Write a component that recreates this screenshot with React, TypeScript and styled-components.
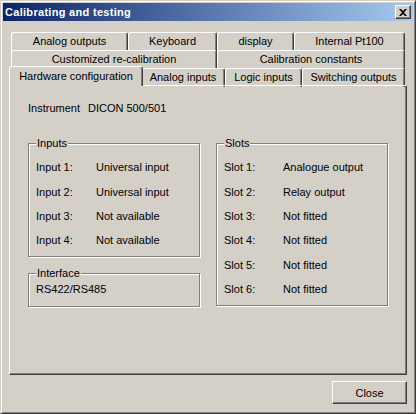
import React from 'react';
import styled, { createGlobalStyle } from 'styled-components';

const GlobalStyle = createGlobalStyle`
  html, body {
    margin: 0;
    padding: 0;
    background: #d4d0c8;
  }
  body {
    font-family: "Liberation Sans", Arial, sans-serif;
    font-size: 11px;
    color: #000;
  }
`;

const Window = styled.div`
  width: 416px;
  height: 414px;
  box-sizing: border-box;
  display: flex;
  flex-direction: column;
  background: #d4d0c8;
  border-top: 1px solid #d4d0c8;
  border-left: 1px solid #d4d0c8;
  border-right: 1px solid #404040;
  border-bottom: 1px solid #404040;
  box-shadow: inset 1px 1px 0 #ffffff, inset -1px -1px 0 #808080;
  padding: 2px;
`;

const TitleBar = styled.div`
  height: 18px;
  flex: none;
  display: flex;
  align-items: center;
  justify-content: space-between;
  padding: 0 2px 0 2px;
  background: linear-gradient(to right, #0a246a, #a6caf0);
`;

const Title = styled.span`
  color: #fff;
  font-weight: bold;
  font-size: 11px;
  letter-spacing: 0.3px;
`;

const TitleButton = styled.div`
  width: 16px;
  height: 14px;
  box-sizing: border-box;
  display: flex;
  align-items: center;
  justify-content: center;
  background: #d4d0c8;
  border-top: 1px solid #ffffff;
  border-left: 1px solid #ffffff;
  border-right: 1px solid #404040;
  border-bottom: 1px solid #404040;
  box-shadow: inset -1px -1px 0 #808080;
`;

const Body = styled.div`
  flex: 1;
  display: flex;
  flex-direction: column;
  padding: 11px 6px 8px 6px;
`;

const Tabs = styled.div`
  display: flex;
  flex-direction: column;
  margin-left: 2px;
  margin-right: 2px;
`;

const TabRow = styled.div<{ $height: number }>`
  display: flex;
  align-items: flex-start;
  height: ${p => p.$height}px;
`;

const Tab = styled.div<{ $width: number; $selected?: boolean; $height: number }>`
  position: relative;
  box-sizing: border-box;
  width: ${p => p.$width + (p.$selected ? 4 : 0)}px;
  height: ${p => (p.$selected ? p.$height + 3 : p.$height + 2)}px;
  margin: ${p => (p.$selected ? '-2px -2px 0 -2px' : '0')};
  z-index: ${p => (p.$selected ? 2 : 1)};
  display: flex;
  align-items: flex-start;
  justify-content: center;
  padding-top: ${p => (p.$selected ? 3 : 2)}px;
  background: #d4d0c8;
  border-top: 1px solid #ffffff;
  border-left: 1px solid #ffffff;
  border-right: 1px solid #404040;
  border-radius: 3px 3px 0 0;
  box-shadow: inset -1px 0 0 #808080;
  white-space: nowrap;
  font-size: 11px;
`;

const Panel = styled.div`
  position: relative;
  z-index: 1;
  height: 290px;
  box-sizing: border-box;
  border-top: 1px solid #ffffff;
  border-left: 1px solid #ffffff;
  border-right: 1px solid #404040;
  border-bottom: 1px solid #404040;
  box-shadow: inset -1px -1px 0 #808080;
  padding: 16px 17px 0 18px;
  display: flex;
  flex-direction: column;
`;

const InfoLine = styled.div`
  display: flex;
  line-height: 13px;
`;

const Label = styled.span<{ $width: number }>`
  width: ${p => p.$width}px;
  flex: none;
`;

const Columns = styled.div`
  display: flex;
  gap: 16px;
  margin-top: 22px;
`;

const Column = styled.div`
  display: flex;
  flex-direction: column;
  gap: 10px;
`;

const Group = styled.fieldset<{ $pad: string }>`
  width: 172px;
  box-sizing: border-box;
  margin: 0;
  padding: ${p => p.$pad};
  min-inline-size: 0;
  border: 1px solid #808080;
  box-shadow: inset 1px 1px 0 #ffffff, 1px 1px 0 #ffffff;
`;

const Legend = styled.legend`
  padding: 0 1px;
  margin-left: 0;
  line-height: 13px;
  background: #d4d0c8;
`;

const Row = styled.div`
  display: flex;
  height: 24.4px;
  align-items: center;
`;

const Footer = styled.div`
  display: flex;
  justify-content: flex-end;
  margin-top: 6px;
`;

const Button = styled.button`
  width: 75px;
  height: 23px;
  box-sizing: border-box;
  font-family: "Liberation Sans", Arial, sans-serif;
  font-size: 11px;
  color: #000;
  background: #d4d0c8;
  border-top: 1px solid #ffffff;
  border-left: 1px solid #ffffff;
  border-right: 1px solid #404040;
  border-bottom: 1px solid #404040;
  box-shadow: inset -1px -1px 0 #808080;
  padding: 0;
`;

const backRows = [
  [
    { label: 'Analog outputs', width: 117 },
    { label: 'Keyboard', width: 89 },
    { label: 'display', width: 77 },
    { label: 'Internal Pt100', width: 111 },
  ],
  [
    { label: 'Customized re-calibration', width: 206 },
    { label: 'Calibration constants', width: 188 },
  ],
];

const frontRow = [
  { label: 'Hardware configuration', width: 130 },
  { label: 'Analog inputs', width: 84 },
  { label: 'Logic inputs', width: 77 },
  { label: 'Switching outputs', width: 103 },
];

const inputs = [
  ['Input 1:', 'Universal input'],
  ['Input 2:', 'Universal input'],
  ['Input 3:', 'Not available'],
  ['Input 4:', 'Not available'],
];

const slots = [
  ['Slot 1:', 'Analogue output'],
  ['Slot 2:', 'Relay output'],
  ['Slot 3:', 'Not fitted'],
  ['Slot 4:', 'Not fitted'],
  ['Slot 5:', 'Not fitted'],
  ['Slot 6:', 'Not fitted'],
];

export default function App() {
  return (
    <>
      <GlobalStyle />
      <Window>
        <TitleBar>
          <Title>Calibrating and testing</Title>
          <TitleButton>
            <svg width="8" height="7" viewBox="0 0 8 7">
              <path d="M0 0h2l2 2 2-2h2L5 3.5 8 7H6L4 5 2 7H0l3-3.5z" fill="#000" />
            </svg>
          </TitleButton>
        </TitleBar>
        <Body>
          <Tabs>
            {backRows.map((row, i) => (
              <TabRow key={i} $height={18}>
                {row.map(t => (
                  <Tab key={t.label} $width={t.width} $height={18}>
                    {t.label}
                  </Tab>
                ))}
              </TabRow>
            ))}
            <TabRow $height={17}>
              {frontRow.map((t, i) => (
                <Tab key={t.label} $width={t.width} $height={17} $selected={i === 0}>
                  {t.label}
                </Tab>
              ))}
            </TabRow>
          </Tabs>
          <Panel>
            <InfoLine>
              <Label $width={60}>Instrument</Label>
              <span>DICON 500/501</span>
            </InfoLine>
            <Columns>
              <Column>
                <Group $pad="5px 7px 3px 7px">
                  <Legend>Inputs</Legend>
                  {inputs.map(([k, v]) => (
                    <Row key={k}>
                      <Label $width={60}>{k}</Label>
                      <span>{v}</span>
                    </Row>
                  ))}
                </Group>
                <Group $pad="3px 7px 10px 7px">
                  <Legend>Interface</Legend>
                  <InfoLine>RS422/RS485</InfoLine>
                </Group>
              </Column>
              <Column>
                <Group $pad="5px 7px 4px 7px">
                  <Legend>Slots</Legend>
                  {slots.map(([k, v]) => (
                    <Row key={k}>
                      <Label $width={59}>{k}</Label>
                      <span>{v}</span>
                    </Row>
                  ))}
                </Group>
              </Column>
            </Columns>
          </Panel>
          <Footer>
            <Button>Close</Button>
          </Footer>
        </Body>
      </Window>
    </>
  );
}
